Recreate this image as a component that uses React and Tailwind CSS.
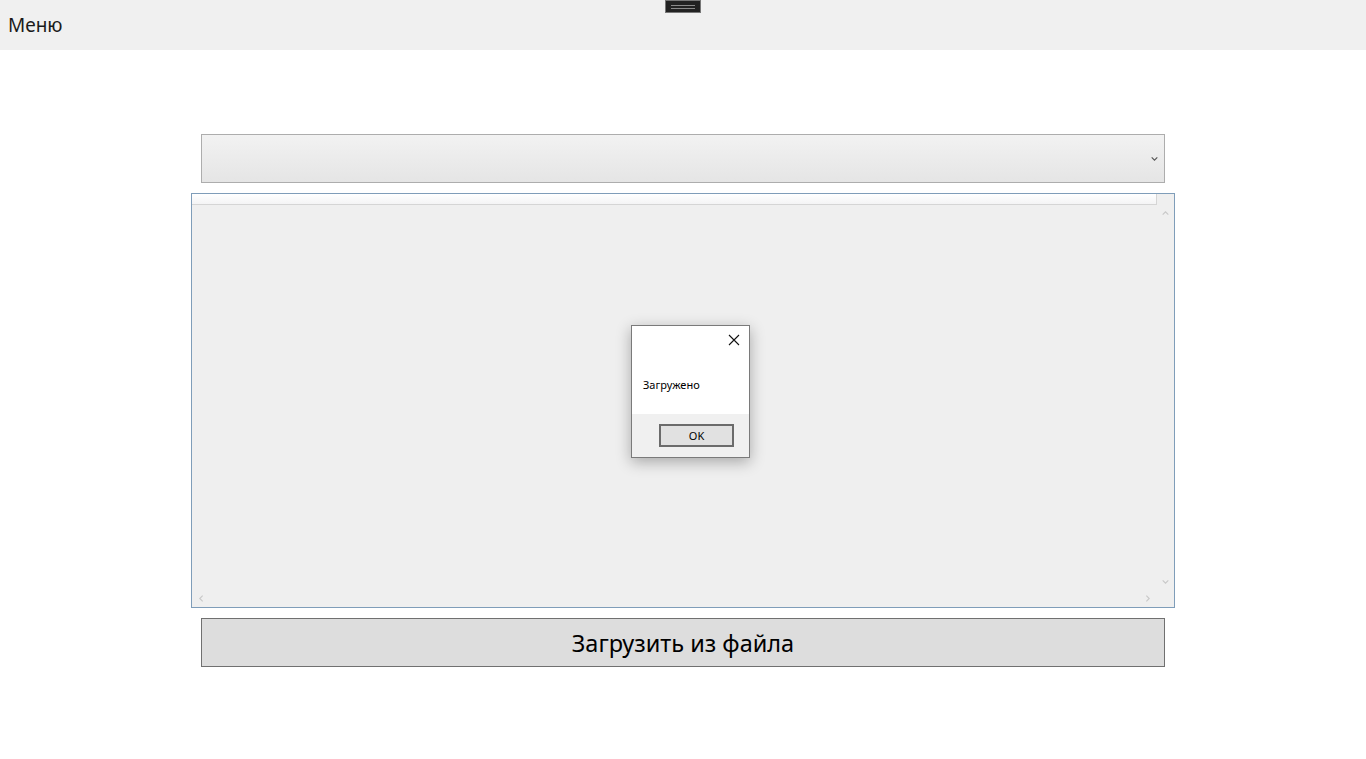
import React from 'react';

const font = { fontFamily: '"Noto Sans", "Open Sans", sans-serif' };

const Chevron = ({ d, className }) => (
  <svg className={className} width="9" height="9" viewBox="0 0 8 8" fill="none">
    <path d={d} stroke="currentColor" strokeWidth="1" />
  </svg>
);

function MessageBox() {
  return (
    <div className="absolute left-[439px] top-[131px] w-[119px] h-[133px] border border-[#7a7a7a] bg-white shadow-[0_4px_14px_rgba(0,0,0,0.3)] flex flex-col">
      <div className="h-[88px] flex flex-col">
        <div className="flex justify-end pt-[8px] pr-[9px]">
          <svg width="12" height="12" viewBox="0 0 12 12">
            <path d="M1 1L11 11M11 1L1 11" stroke="#111" strokeWidth="1.1" />
          </svg>
        </div>
        <div className="pl-[11px] pt-[33px] text-[11px] leading-none text-black">Загружено</div>
      </div>
      <div className="flex-1 bg-[#f0f0f0] flex justify-end pr-[15px] pt-[10px]">
        <button className="w-[75px] h-[23px] border-2 border-[#6b6b6b] bg-[#e1e1e1] text-[11px] text-black leading-none">
          OK
        </button>
      </div>
    </div>
  );
}

export default function App() {
  return (
    <div className="w-[1366px] h-[759px] bg-white flex flex-col" style={font}>
      {/* Menu bar */}
      <div className="relative h-[50px] bg-[#f0f0f0] flex items-start">
        <span className="pl-[8px] pt-[12px] text-[19px] leading-[26px] text-[#1a1a1a]">Меню</span>
        <div className="absolute left-[665px] top-0 w-[36px] h-[13px] bg-[#222] border border-[#777] flex flex-col items-center justify-center gap-[2px]">
          <div className="w-[24px] h-px bg-[#8a8a8a]" />
          <div className="w-[24px] h-px bg-[#8a8a8a]" />
        </div>
      </div>

      <div className="flex flex-col items-center pt-[84px]">
        {/* Combo box */}
        <div className="w-[964px] h-[49px] border border-[#adadad] bg-gradient-to-b from-[#f2f2f2] to-[#e5e5e5] flex items-center justify-end pr-[5px]">
          <Chevron className="text-[#555]" d="M1.5 3L4 5.5L6.5 3" />
        </div>

        {/* Data grid */}
        <div className="relative mt-[10px] w-[984px] h-[415px] border border-[#7f9db9] bg-[#efefef] flex flex-col">
          <div className="w-[965px] h-[11px] bg-gradient-to-b from-[#ffffff] to-[#f4f4f5] border-b border-r border-[#d5d5d5]" />
          <div className="flex-1 flex">
            <div className="flex-1" />
            <div className="w-[17px] flex flex-col items-center justify-between pt-[4px] pb-[4px] text-[#c8c8c8]">
              <Chevron d="M1.5 5L4 2.5L6.5 5" />
              <Chevron d="M1.5 3L4 5.5L6.5 3" />
            </div>
          </div>
          <div className="h-[17px] flex items-center justify-between pl-[5px] pr-[22px] text-[#c8c8c8]">
            <Chevron d="M5 1.5L2.5 4L5 6.5" />
            <Chevron d="M3 1.5L5.5 4L3 6.5" />
          </div>
          <MessageBox />
        </div>

        {/* Load button */}
        <button className="mt-[10px] w-[964px] h-[49px] border border-[#707070] bg-[#dddddd] text-[23.5px] text-black leading-none pt-[3px]">
          Загрузить из файла
        </button>
      </div>
    </div>
  );
}
